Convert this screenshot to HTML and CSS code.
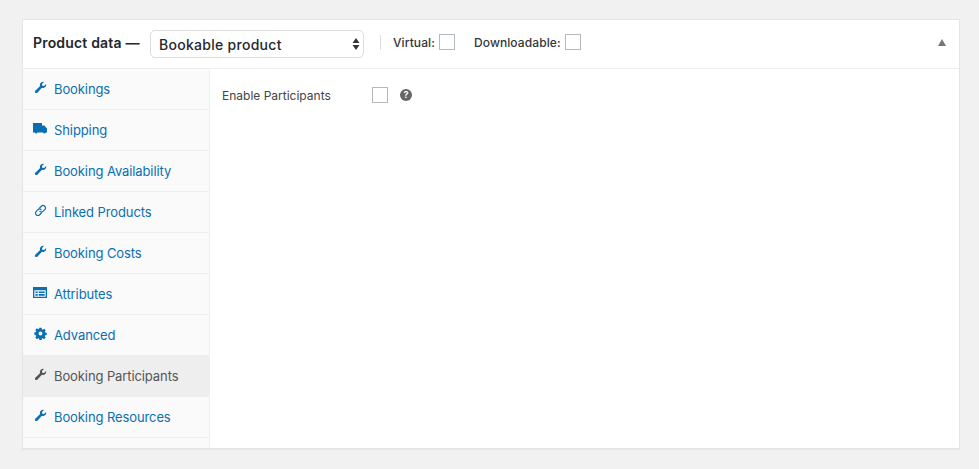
FILE: index.html
```html
<!DOCTYPE html>
<html lang="en">
<head>
<meta charset="utf-8">
<title>Product data</title>
<link rel="stylesheet" href="styles.css">
</head>
<body>
<svg class="defs" width="0" height="0" aria-hidden="true">
  <symbol id="wrench" viewBox="0 0 14 14"><path d="M13 3.100c.3 1.300 0 2.500-.9 3.400-1 1-2.400 1.200-3.600.7L3.600 12.600c-.6.6-1.600.6-2.200 0-.6-.6-.6-1.500 0-2.100L6.600 5.500c-.5-1.200-.3-2.600.7-3.600C8.200 1 9.500.7 10.700 1L8.600 3.100l.3 2 2 .3L13 3.100z"/></symbol>
  <symbol id="truck" viewBox="0 0 14 11"><path d="M0 0h9v2.500h2.300L14 5.500v4h-1.200a1.400 1.400 0 0 1-2.700 0H4.400a1.400 1.400 0 0 1-2.700 0H0V0z"/></symbol>
  <symbol id="link" viewBox="0 0 14 14"><g fill="none" stroke="currentColor" stroke-width="1.300" stroke-linecap="round"><path d="M6 4.300 7.900 2.400a2.300 2.300 0 0 1 3.700 3.700L9.700 8a2.300 2.300 0 0 1-3.300 0"/><path d="M8 9.700 6.100 11.600a2.300 2.300 0 0 1-3.700-3.700L4.300 6a2.300 2.300 0 0 1 3.300 0"/></g></symbol>
  <symbol id="table" viewBox="0 0 14 11"><path fill-rule="evenodd" d="M0 0h14v11H0V0zm1.300 3.200v6.500h11.400V3.200H1.300zM2.400 4.400h2.300v1.700H2.400V4.400zm3.300 0h6v1.700h-6V4.400zM2.400 7h2.300v1.700H2.400V7zm3.300 0h6v1.700h-6V7z"/></symbol>
  <symbol id="gear" viewBox="0 0 14 14"><path fill-rule="evenodd" d="M5.800.8h2.400l.3 1.700 1 .4 1.400-1 1.700 1.700-1 1.400.4 1 1.700.3v2.400l-1.700.3-.4 1 1 1.400-1.700 1.700-1.400-1-1 .4-.3 1.700H5.800l-.3-1.700-1-.4-1.400 1-1.700-1.700 1-1.400-.4-1L.3 8.200V5.800L2 5.500l.4-1-1-1.400 1.700-1.700 1.400 1 1-.4.3-1.500zM7 4.900a2.100 2.100 0 1 0 0 4.200 2.100 2.100 0 0 0 0-4.200z"/></symbol>
</svg>
<main class="panel">
  <header class="head">
    <h2 class="title">Product data —</h2>
    <div class="select">
      <span>Bookable product</span>
      <svg class="updown" width="8" height="12" viewBox="0 0 8 12"><path d="M4 0l3.500 5H.5zM4 12 .5 7h7z"/></svg>
    </div>
    <span class="sep"></span>
    <label class="opt">Virtual:<span class="check"></span></label>
    <label class="opt opt-2">Downloadable:<span class="check"></span></label>
    <span class="toggle"></span>
  </header>
  <div class="body">
    <ul class="tabs">
      <li class="tab"><svg class="ic"><use href="#wrench"/></svg>Bookings</li>
      <li class="tab"><svg class="ic ic-wide"><use href="#truck"/></svg>Shipping</li>
      <li class="tab"><svg class="ic"><use href="#wrench"/></svg>Booking Availability</li>
      <li class="tab"><svg class="ic"><use href="#link"/></svg>Linked Products</li>
      <li class="tab"><svg class="ic"><use href="#wrench"/></svg>Booking Costs</li>
      <li class="tab"><svg class="ic ic-wide"><use href="#table"/></svg>Attributes</li>
      <li class="tab"><svg class="ic"><use href="#gear"/></svg>Advanced</li>
      <li class="tab active"><svg class="ic"><use href="#wrench"/></svg>Booking Participants</li>
      <li class="tab"><svg class="ic"><use href="#wrench"/></svg>Booking Resources</li>
    </ul>
    <section class="content">
      <span class="field-label">Enable Participants</span>
      <span class="check field-check"></span>
      <span class="help">?</span>
    </section>
  </div>
</main>
</body>
</html>
```
FILE: styles.css
```css
* { box-sizing: border-box; }
html, body { margin: 0; height: 100%; }
body {
  background: #f1f1f1;
  padding: 19px 19px 20px 22px;
  font-family: Inter, "Noto Sans", sans-serif;
  font-size: 13px;
  color: #444;
  overflow: hidden;
}
.defs { display: block; width: 0; height: 0; }
.panel {
  height: 430px;
  background: #fff;
  border: 1px solid #e5e5e5;
  box-shadow: 0 1px 1px rgba(0,0,0,.04);
  display: flex;
  flex-direction: column;
}
.head {
  height: 49px;
  flex: none;
  border-bottom: 1px solid #eee;
  display: flex;
  align-items: center;
  padding-left: 10px;
  padding-bottom: 4px;
}
.title {
  margin: 0;
  font-size: 14px;
  font-weight: 600;
  color: #23282d;
  letter-spacing: .18px;
  width: 117px;
  flex: none;
}
.select {
  width: 214px;
  height: 28px;
  flex: none;
  border: 1px solid #ddd;
  border-radius: 5px;
  display: flex;
  align-items: center;
  justify-content: space-between;
  padding: 0 3px 0 8px;
  font-size: 14px;
  font-weight: 500;
  letter-spacing: .28px;
  color: #23282d;
  margin-top: 4px;
}
.updown { fill: #32373c; }
.sep { width: 1px; height: 15px; background: #ddd; margin: 0 12px 0 16px; flex: none; }
.opt {
  display: flex;
  align-items: center;
  gap: 4px;
  font-size: 12px;
  font-weight: 500;
  letter-spacing: .1px;
  color: #32373c;
}
.opt-2 { margin-left: 19px; }
.check {
  width: 16px;
  height: 16px;
  display: block;
  border: 1px solid #b4b9be;
  background: #fff;
  flex: none;
}
.toggle {
  margin-left: auto;
  margin-right: 13px;
  width: 0;
  height: 0;
  border-left: 4.500px solid transparent;
  border-right: 4.500px solid transparent;
  border-bottom: 7px solid #72777c;
}
.body { flex: 1; display: flex; min-height: 0; }
.tabs {
  list-style: none;
  margin: 0;
  padding: 0;
  width: 187px;
  flex: none;
  background: #fafafa;
  border-right: 1px solid #eee;
}
.tab {
  height: 41px;
  display: flex;
  align-items: center;
  border-bottom: 1px solid #eee;
  color: #0a6fb0;
  padding-left: 10px;
  font-size: 13px;
  letter-spacing: -.1px;
}
.tab.active {
  background: #eee;
  color: #555;
  border-bottom-color: #eee;
}
.ic {
  width: 13px;
  height: 13px;
  margin: -3px 7px 0 1px;
  fill: currentColor;
  flex: none;
}
.ic-wide {
  width: 14px;
  height: 11px;
  margin: -3px 7px 0 0;
}
.content {
  flex: 1;
  display: flex;
  align-items: flex-start;
  padding: 18px 0 0 12px;
}
.field-label { width: 150px; font-size: 12px; line-height: 18px; color: #444; flex: none; }
.field-check { margin-right: 12px; }
.help {
  width: 12px;
  height: 12px;
  margin-top: 2px;
  border-radius: 50%;
  background: #666;
  color: #fff;
  font-size: 9px;
  font-weight: 700;
  line-height: 12px;
  text-align: center;
}
```
